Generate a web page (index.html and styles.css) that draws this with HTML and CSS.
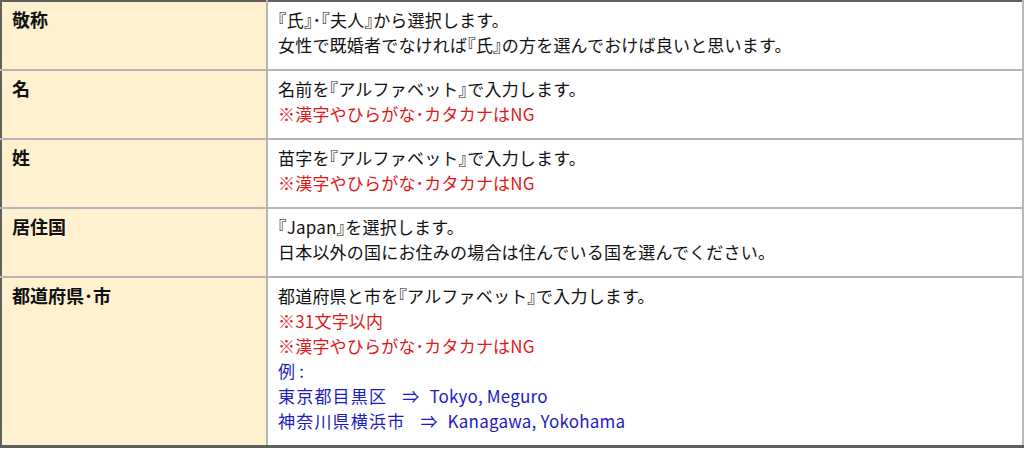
FILE: index.html
```html
<!DOCTYPE html>
<html lang="ja">
<head>
<meta charset="utf-8">
<link rel="stylesheet" href="styles.css">
</head>
<body>
<table class="info">
  <tr>
    <th class="label">敬称</th>
    <td class="desc"><span class="bk">『</span>氏<span class="bk">』</span>･<span class="bk">『</span>夫人<span class="bk">』</span>から選択します。<br>女性で既婚者でなければ<span class="bk">『</span>氏<span class="bk">』</span>の方を選んでおけば良いと思います。</td>
  </tr>
  <tr>
    <th class="label">名</th>
    <td class="desc">名前を<span class="bk">『</span>アルファベット<span class="bk">』</span>で入力します。<br><span class="red">※漢字やひらがな･カタカナはNG</span></td>
  </tr>
  <tr>
    <th class="label">姓</th>
    <td class="desc">苗字を<span class="bk">『</span>アルファベット<span class="bk">』</span>で入力します。<br><span class="red">※漢字やひらがな･カタカナはNG</span></td>
  </tr>
  <tr>
    <th class="label">居住国</th>
    <td class="desc"><span class="bk">『</span>Japan<span class="bk">』</span>を選択します。<br>日本以外の国にお住みの場合は住んでいる国を選んでください。</td>
  </tr>
  <tr>
    <th class="label">都道府県･市</th>
    <td class="desc">都道府県と市を<span class="bk">『</span>アルファベット<span class="bk">』</span>で入力します。<br><span class="red">※31文字以内</span><br><span class="red">※漢字やひらがな･カタカナはNG</span><br><span class="blue">例 :</span><br><span class="blue"><span class="wide">東京都目黒区</span><span class="arrow">⇒</span>Tokyo, Meguro</span><br><span class="blue"><span class="wide">神奈川県横浜市</span><span class="arrow">⇒</span>Kanagawa, Yokohama</span></td>
  </tr>
</table>
</body>
</html>
```

FILE: styles.css
```css
html, body {
  margin: 0;
  padding: 0;
  background: #ffffff;
}

body {
  font-family: "Noto Sans CJK JP", "Noto Sans", sans-serif;
  font-size: 17px;
  color: #111111;
}

.info {
  width: 1024px;
  border-collapse: collapse;
  border-top: 2px solid #5f5f5f;
  border-left: 2px solid #5f5f5f;
  border-bottom: 3px solid #5f5f5f;
  border-right: 2px solid #b9b9b9;
}

.info tr {
  border-bottom: 2px solid #b4b4b4;
}

.label {
  width: 244px;
  background: #fff1d0;
  text-align: left;
  vertical-align: top;
  font-weight: bold;
  font-size: 18px;
  line-height: 25px;
  padding: 5px 10px 12px 10px;
  border-right: 2px solid #b4b4b4;
}

.desc {
  vertical-align: top;
  line-height: 25px;
  padding: 5px 10px 12px 10px;
  font-weight: normal;
  letter-spacing: 0.2px;
}

.bk {
  font-feature-settings: "halt";
}

.red {
  color: #e01818;
}

.blue {
  color: #1b1bc4;
}

.wide {
  letter-spacing: 1.2px;
}

.arrow {
  display: inline-block;
  margin: 0 10px 0 15px;
}
```
